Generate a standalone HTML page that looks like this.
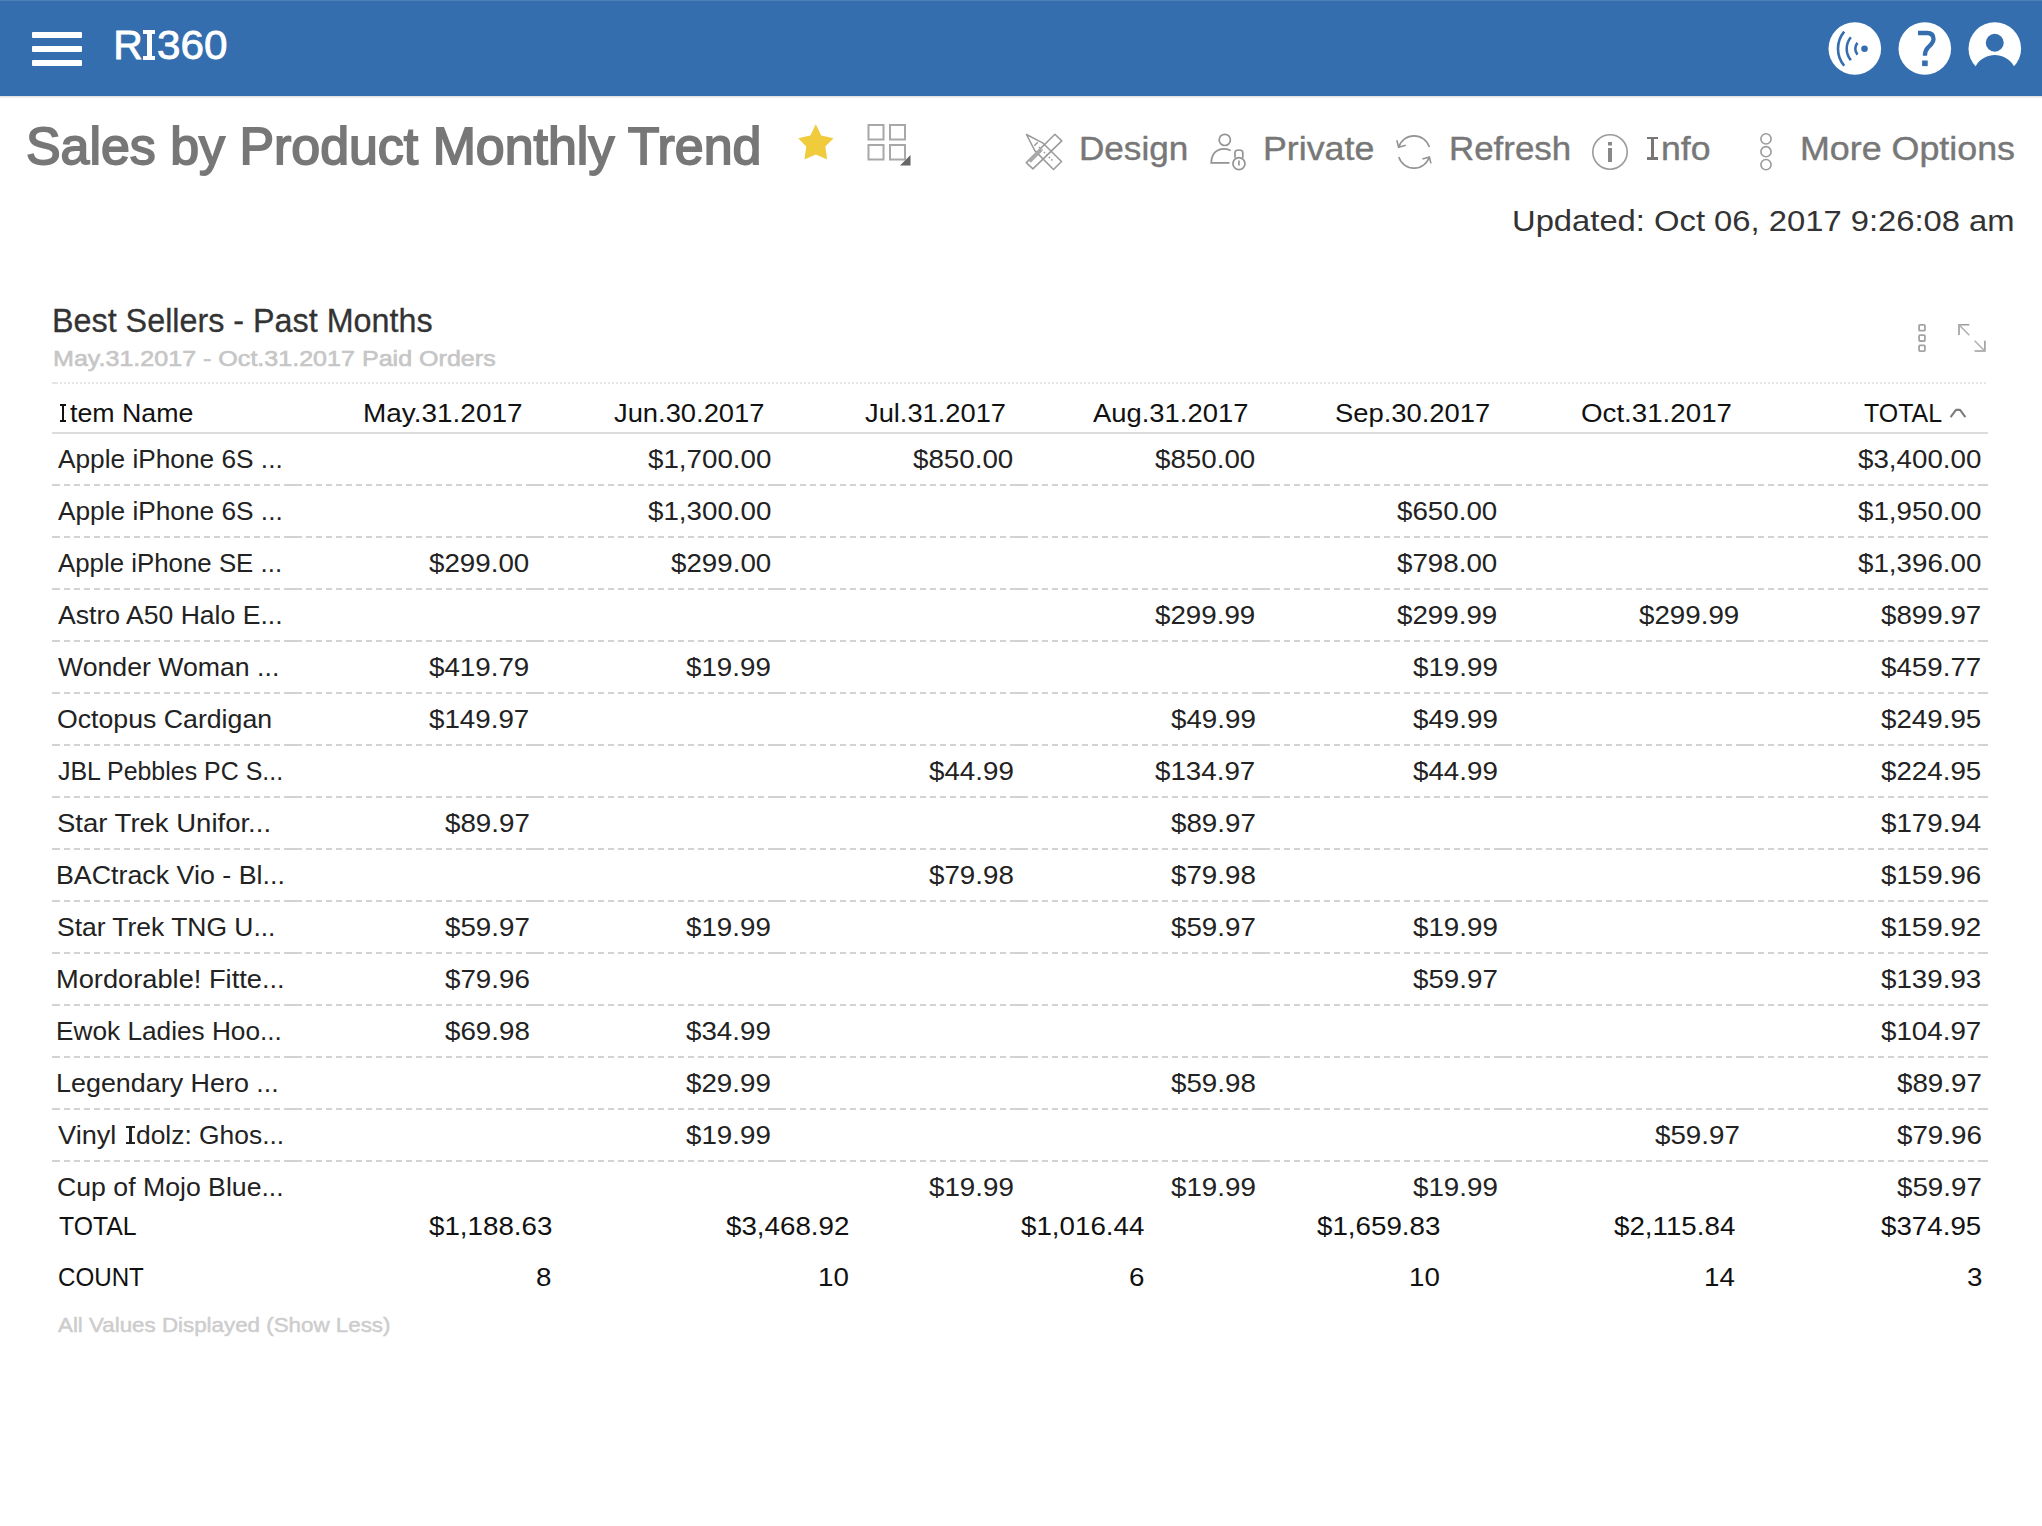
<!DOCTYPE html>
<html><head><meta charset="utf-8"><title>Sales by Product Monthly Trend</title>
<style>
html,body{margin:0;padding:0;}
body{width:2042px;height:1526px;position:relative;overflow:hidden;background:#fff;font-family:'Liberation Sans', sans-serif;}
.t{position:absolute;white-space:nowrap;line-height:normal;transform-origin:0 0;}
svg{display:block;}
.dl{position:absolute;width:242px;height:2px;background:repeating-linear-gradient(90deg,#d2d2d2 0 6px,transparent 6px 10px);background-position:2px 0;}
.dl::before,.dl::after{content:"";position:absolute;top:0;width:8px;height:2px;background:#d2d2d2;}
.dl::before{left:0;} .dl::after{right:0;}
</style></head><body>
<div style="position:absolute;left:0;top:0;width:2042px;height:96px;background:#346eae;"></div>
<div style="position:absolute;left:0;top:0;width:2042px;height:1px;background:#4a7fba;"></div>
<div style="position:absolute;left:0;top:96px;width:2042px;height:2px;background:linear-gradient(#dedede,#f4f4f4);"></div>
<div style="position:absolute;left:32px;top:32px;width:50px;height:6px;background:#fff;border-radius:1px;"></div>
<div style="position:absolute;left:32px;top:46px;width:50px;height:6px;background:#fff;border-radius:1px;"></div>
<div style="position:absolute;left:32px;top:60px;width:50px;height:6px;background:#fff;border-radius:1px;"></div>
<div class="t" style="left:113.20px;top:22.00px;font-size:41px;color:#fff;-webkit-text-stroke:0.8px #fff;">R</div>
<div style="position:absolute;left:143px;top:30.4px;width:12.199999999999989px;height:3.8px;background:#fff;"></div>
<div style="position:absolute;left:143px;top:55.900000000000006px;width:12.199999999999989px;height:3.8px;background:#fff;"></div>
<div style="position:absolute;left:146.6px;top:30.4px;width:5px;height:29.300000000000004px;background:#fff;"></div>
<div class="t" style="left:157.27px;top:22.00px;font-size:41px;color:#fff;transform:scaleX(1.0299);-webkit-text-stroke:0.8px #fff;">360</div>
<svg style="position:absolute;left:1828px;top:22px" width="54" height="54" viewBox="0 0 54 54">
<circle cx="26.8" cy="26.5" r="26.3" fill="#fff"/>
<circle cx="36.5" cy="26.7" r="3.3" fill="#346eae"/>
<g fill="none" stroke="#346eae" stroke-width="2.6">
<path d="M29.45 20.8 A9.2 9.2 0 0 0 29.45 32.6"/>
<path d="M22.86 15.25 A17.8 17.8 0 0 0 22.86 38.15"/>
<path d="M16.2 9.66 A26.5 26.5 0 0 0 16.2 43.74"/>
</g>
</svg>
<svg style="position:absolute;left:1898px;top:22px" width="54" height="54" viewBox="0 0 54 54">
<circle cx="26.8" cy="26.5" r="26.3" fill="#fff"/>
<path d="M20 11 L29 11 C33.5 11 35.5 13.5 35.5 17 C35.5 21 32.5 23 30 25.5 C27.8 27.7 26.9 29.5 26.9 33.8" fill="none" stroke="#346eae" stroke-width="4.3"/>
<rect x="24.1" y="38.5" width="5.6" height="5.6" fill="#346eae"/>
</svg>
<svg style="position:absolute;left:1968px;top:22px" width="54" height="54" viewBox="0 0 54 54">
<circle cx="26.8" cy="26.5" r="26.3" fill="#fff"/>
<circle cx="26.75" cy="20.75" r="9" fill="#346eae"/>
<path d="M0 58 L7.8 44 C12 36.5 20 33 26.8 33 C33.6 33 41.6 36.5 45.8 44 L54 58 Z" fill="#346eae"/>
</svg>
<div class="t" style="left:26.40px;top:115.60px;font-size:52px;color:#777;transform:scaleX(0.9978);-webkit-text-stroke:1.8px #777;">Sales by Product Monthly Trend</div>
<svg style="position:absolute;left:790px;top:115px" width="50" height="50" viewBox="0 0 50 50">
<path d="M25.8 9.2 L31.2 20.4 L43.6 23.2 L35.3 31.5 L37.2 44.6 L25.8 39.5 L14.4 44.6 L16.3 31.5 L8.3 23.2 L20.4 20.4 Z" fill="#f0cb3c"/>
</svg>
<svg style="position:absolute;left:866px;top:122px" width="48" height="48" viewBox="0 0 48 48">
<g fill="none" stroke="#a8a8a8" stroke-width="2">
<rect x="2.5" y="3" width="15" height="14.5"/><rect x="24" y="3" width="15" height="14.5"/>
<rect x="2.5" y="23" width="15" height="14.5"/><rect x="24" y="23" width="15" height="14.5"/>
</g>
<path d="M44.5 33 L44.5 43.5 L34 43.5 Z" fill="#666"/>
</svg>
<svg style="position:absolute;left:1020px;top:128px" width="48" height="48" viewBox="0 0 48 48">
<g fill="none" stroke="#999" stroke-width="1.5" stroke-linejoin="round">
<path d="M6.5 6.5 L22.6 14.8 L41.5 33.5 L33.5 41.5 L14.8 22.6 Z"/>
<path d="M14.3 17.8 L17.8 14.3"/>
<path d="M34.9 6.3 L41.8 12.9 L12.9 40.9 L6.3 34.6 Z"/>
<path d="M19 19 L33 33" stroke-dasharray="1.5 2"/>
<path d="M9.5 33.5 L21 22" stroke-width="3.5" stroke="#a8a8a8"/>
</g>
</svg>
<div class="t" style="left:1078.87px;top:130.00px;font-size:33px;color:#777;transform:scaleX(1.0636);-webkit-text-stroke:0.4px #777;">Design</div>
<svg style="position:absolute;left:1204px;top:128px" width="48" height="48" viewBox="0 0 48 48">
<g fill="none" stroke="#939393" stroke-width="1.7">
<circle cx="20.8" cy="11.9" r="5.6"/>
<path d="M26.7 22.6 C24.5 21.2 22.8 20.8 20.8 20.8 C15 20.8 12 22 9.5 26 C7.8 28.7 7.2 31 7.2 34.9 L25.5 34.9"/>
<path d="M31 29.7 L31 24.5 C31 22.8 32.3 22 34.9 22 C37.5 22 38.8 22.8 38.8 24.5 L38.8 29.7"/>
<circle cx="34.95" cy="35.7" r="6"/>
<path d="M34.9 32.4 L34.9 37.4"/>
</g>
</svg>
<div class="t" style="left:1263.13px;top:130.00px;font-size:33px;color:#777;transform:scaleX(1.0840);-webkit-text-stroke:0.4px #777;">Private</div>
<svg style="position:absolute;left:1390px;top:128px" width="48" height="48" viewBox="0 0 48 48">
<g fill="none" stroke="#939393" stroke-width="1.6">
<path d="M8.8 19 A16 16 0 0 1 39.3 19"/>
<path d="M39.3 29 A16 16 0 0 1 8.8 29"/>
<path d="M6.8 12.3 L8.6 19.2 L15.7 17.2"/>
<path d="M32.4 31 L39.4 28.9 L40.9 35.4"/>
</g>
</svg>
<div class="t" style="left:1448.69px;top:130.00px;font-size:33px;color:#777;transform:scaleX(1.0571);-webkit-text-stroke:0.4px #777;">Refresh</div>
<svg style="position:absolute;left:1590px;top:132px" width="40" height="40" viewBox="0 0 40 40">
<circle cx="20" cy="20" r="17.2" fill="none" stroke="#9a9a9a" stroke-width="1.6"/>
<rect x="18" y="10" width="4" height="3.5" fill="#888"/>
<rect x="18" y="16" width="4" height="14" fill="#888"/>
</svg>
<div style="position:absolute;left:1647px;top:136.5px;width:11px;height:2.6px;background:#777;"></div>
<div style="position:absolute;left:1647px;top:157.4px;width:11px;height:2.6px;background:#777;"></div>
<div style="position:absolute;left:1650.8px;top:136.5px;width:3.4px;height:23.5px;background:#777;"></div>
<div class="t" style="left:1660.84px;top:130.00px;font-size:33px;color:#777;transform:scaleX(1.0791);-webkit-text-stroke:0.4px #777;">nfo</div>
<svg style="position:absolute;left:1756px;top:132px" width="20" height="40" viewBox="0 0 20 40">
<g fill="none" stroke="#9a9a9a" stroke-width="1.6">
<circle cx="10" cy="6.9" r="5.1"/><circle cx="10" cy="19.7" r="5.1"/><circle cx="10" cy="32.6" r="5.1"/>
</g>
</svg>
<div class="t" style="left:1799.53px;top:130.00px;font-size:33px;color:#777;transform:scaleX(1.0856);-webkit-text-stroke:0.4px #777;">More Options</div>
<div class="t" style="left:1511.74px;top:205.00px;font-size:29px;color:#333;transform:scaleX(1.1295);">Updated: Oct 06, 2017 9:26:08 am</div>
<div class="t" style="left:52.07px;top:301.70px;font-size:33.5px;color:#333;transform:scaleX(0.9643);-webkit-text-stroke:0.3px #333;">Best Sellers - Past Months</div>
<div class="t" style="left:52.86px;top:346.00px;font-size:22px;color:#c6c6c6;transform:scaleX(1.1395);-webkit-text-stroke:0.6px #c6c6c6;">May.31.2017 - Oct.31.2017 Paid Orders</div>
<svg style="position:absolute;left:1914px;top:320px" width="16" height="36" viewBox="0 0 16 36">
<g fill="none" stroke="#a4a4a4" stroke-width="1.8">
<rect x="5.1" y="4.9" width="5.8" height="5.8" rx="0.8"/><rect x="5.1" y="15.2" width="5.8" height="5.8" rx="0.8"/><rect x="5.1" y="25.3" width="5.8" height="5.8" rx="0.8"/>
</g>
</svg>
<svg style="position:absolute;left:1954px;top:320px" width="36" height="36" viewBox="0 0 36 36">
<g fill="none" stroke="#9c9c9c" stroke-width="1.6">
<path d="M15.3 4.8 L5 4.8 L5 14.9"/><path d="M5 4.8 L15.3 15.3" stroke="#b0b0b0"/>
<path d="M20.6 31 L30.9 31 L30.9 20.7"/><path d="M30.9 31 L20.6 20.7" stroke="#b0b0b0"/>
</g>
</svg>
<div style="position:absolute;left:52px;top:382px;width:1936px;height:2px;background:repeating-linear-gradient(90deg,#e6e6e6 0 2px,transparent 2px 4px);"></div>
<div style="position:absolute;left:52px;top:382px;width:4px;height:2px;background:#e4e4e4;"></div>
<div style="position:absolute;left:59.8px;top:404px;width:6.200000000000003px;height:1.9px;background:#111;"></div>
<div style="position:absolute;left:59.8px;top:419.90000000000003px;width:6.200000000000003px;height:1.9px;background:#111;"></div>
<div style="position:absolute;left:61.8px;top:404px;width:2.2px;height:17.80000000000001px;background:#111;"></div>
<div class="t" style="left:70.30px;top:398.80px;font-size:25px;color:#111;transform:scaleX(1.0704);">tem Name</div>
<div class="t" style="left:362.56px;top:398.80px;font-size:25px;color:#111;transform:scaleX(1.1179);">May.31.2017</div>
<div class="t" style="left:613.70px;top:398.80px;font-size:25px;color:#111;transform:scaleX(1.0934);">Jun.30.2017</div>
<div class="t" style="left:864.80px;top:398.80px;font-size:25px;color:#111;transform:scaleX(1.0906);">Jul.31.2017</div>
<div class="t" style="left:1093.20px;top:398.80px;font-size:25px;color:#111;transform:scaleX(1.0957);">Aug.31.2017</div>
<div class="t" style="left:1334.51px;top:398.80px;font-size:25px;color:#111;transform:scaleX(1.0943);">Sep.30.2017</div>
<div class="t" style="left:1581.39px;top:398.80px;font-size:25px;color:#111;transform:scaleX(1.1082);">Oct.31.2017</div>
<div class="t" style="left:1864.20px;top:398.80px;font-size:25px;color:#111;transform:scaleX(0.9974);">TOTAL</div>
<svg style="position:absolute;left:1948px;top:404px" width="20" height="16" viewBox="0 0 20 16">
<path d="M2.6 13.2 L8 5.9 L12 5.9 L17.4 13.2" fill="none" stroke="#7c7c7c" stroke-width="2.1" stroke-linejoin="round"/>
</svg>
<div style="position:absolute;left:52px;top:432px;width:1936px;height:2px;background:#dcdcdc;"></div>
<div class="t" style="left:58.00px;top:444.70px;font-size:25px;color:#222;transform:scaleX(1.0500);">Apple iPhone 6S ...</div>
<div class="t" style="left:647.62px;top:444.70px;font-size:25px;color:#222;transform:scaleX(1.1098);">$1,700.00</div>
<div class="t" style="left:913.12px;top:444.70px;font-size:25px;color:#222;transform:scaleX(1.1098);">$850.00</div>
<div class="t" style="left:1155.12px;top:444.70px;font-size:25px;color:#222;transform:scaleX(1.1098);">$850.00</div>
<div class="t" style="left:1857.82px;top:444.70px;font-size:25px;color:#222;transform:scaleX(1.1098);">$3,400.00</div>
<div class="dl" style="left:52px;top:484px;"></div>
<div class="dl" style="left:294px;top:484px;"></div>
<div class="dl" style="left:536px;top:484px;"></div>
<div class="dl" style="left:778px;top:484px;"></div>
<div class="dl" style="left:1020px;top:484px;"></div>
<div class="dl" style="left:1262px;top:484px;"></div>
<div class="dl" style="left:1504px;top:484px;"></div>
<div class="dl" style="left:1746px;top:484px;"></div>
<div class="t" style="left:58.00px;top:496.70px;font-size:25px;color:#222;transform:scaleX(1.0500);">Apple iPhone 6S ...</div>
<div class="t" style="left:647.62px;top:496.70px;font-size:25px;color:#222;transform:scaleX(1.1098);">$1,300.00</div>
<div class="t" style="left:1397.12px;top:496.70px;font-size:25px;color:#222;transform:scaleX(1.1098);">$650.00</div>
<div class="t" style="left:1857.82px;top:496.70px;font-size:25px;color:#222;transform:scaleX(1.1098);">$1,950.00</div>
<div class="dl" style="left:52px;top:536px;"></div>
<div class="dl" style="left:294px;top:536px;"></div>
<div class="dl" style="left:536px;top:536px;"></div>
<div class="dl" style="left:778px;top:536px;"></div>
<div class="dl" style="left:1020px;top:536px;"></div>
<div class="dl" style="left:1262px;top:536px;"></div>
<div class="dl" style="left:1504px;top:536px;"></div>
<div class="dl" style="left:1746px;top:536px;"></div>
<div class="t" style="left:58.00px;top:548.70px;font-size:25px;color:#222;transform:scaleX(1.0335);">Apple iPhone SE ...</div>
<div class="t" style="left:429.42px;top:548.70px;font-size:25px;color:#222;transform:scaleX(1.1098);">$299.00</div>
<div class="t" style="left:670.92px;top:548.70px;font-size:25px;color:#222;transform:scaleX(1.1098);">$299.00</div>
<div class="t" style="left:1397.12px;top:548.70px;font-size:25px;color:#222;transform:scaleX(1.1098);">$798.00</div>
<div class="t" style="left:1857.82px;top:548.70px;font-size:25px;color:#222;transform:scaleX(1.1098);">$1,396.00</div>
<div class="dl" style="left:52px;top:588px;"></div>
<div class="dl" style="left:294px;top:588px;"></div>
<div class="dl" style="left:536px;top:588px;"></div>
<div class="dl" style="left:778px;top:588px;"></div>
<div class="dl" style="left:1020px;top:588px;"></div>
<div class="dl" style="left:1262px;top:588px;"></div>
<div class="dl" style="left:1504px;top:588px;"></div>
<div class="dl" style="left:1746px;top:588px;"></div>
<div class="t" style="left:58.00px;top:600.70px;font-size:25px;color:#222;transform:scaleX(1.0632);">Astro A50 Halo E...</div>
<div class="t" style="left:1155.12px;top:600.70px;font-size:25px;color:#222;transform:scaleX(1.1098);">$299.99</div>
<div class="t" style="left:1397.12px;top:600.70px;font-size:25px;color:#222;transform:scaleX(1.1098);">$299.99</div>
<div class="t" style="left:1639.12px;top:600.70px;font-size:25px;color:#222;transform:scaleX(1.1098);">$299.99</div>
<div class="t" style="left:1881.12px;top:600.70px;font-size:25px;color:#222;transform:scaleX(1.1098);">$899.97</div>
<div class="dl" style="left:52px;top:640px;"></div>
<div class="dl" style="left:294px;top:640px;"></div>
<div class="dl" style="left:536px;top:640px;"></div>
<div class="dl" style="left:778px;top:640px;"></div>
<div class="dl" style="left:1020px;top:640px;"></div>
<div class="dl" style="left:1262px;top:640px;"></div>
<div class="dl" style="left:1504px;top:640px;"></div>
<div class="dl" style="left:1746px;top:640px;"></div>
<div class="t" style="left:58.00px;top:652.70px;font-size:25px;color:#222;transform:scaleX(1.0665);">Wonder Woman ...</div>
<div class="t" style="left:429.42px;top:652.70px;font-size:25px;color:#222;transform:scaleX(1.1098);">$419.79</div>
<div class="t" style="left:686.46px;top:652.70px;font-size:25px;color:#222;transform:scaleX(1.1098);">$19.99</div>
<div class="t" style="left:1412.66px;top:652.70px;font-size:25px;color:#222;transform:scaleX(1.1098);">$19.99</div>
<div class="t" style="left:1881.12px;top:652.70px;font-size:25px;color:#222;transform:scaleX(1.1098);">$459.77</div>
<div class="dl" style="left:52px;top:692px;"></div>
<div class="dl" style="left:294px;top:692px;"></div>
<div class="dl" style="left:536px;top:692px;"></div>
<div class="dl" style="left:778px;top:692px;"></div>
<div class="dl" style="left:1020px;top:692px;"></div>
<div class="dl" style="left:1262px;top:692px;"></div>
<div class="dl" style="left:1504px;top:692px;"></div>
<div class="dl" style="left:1746px;top:692px;"></div>
<div class="t" style="left:56.93px;top:704.70px;font-size:25px;color:#222;transform:scaleX(1.0673);">Octopus Cardigan</div>
<div class="t" style="left:429.42px;top:704.70px;font-size:25px;color:#222;transform:scaleX(1.1098);">$149.97</div>
<div class="t" style="left:1170.66px;top:704.70px;font-size:25px;color:#222;transform:scaleX(1.1098);">$49.99</div>
<div class="t" style="left:1412.66px;top:704.70px;font-size:25px;color:#222;transform:scaleX(1.1098);">$49.99</div>
<div class="t" style="left:1881.12px;top:704.70px;font-size:25px;color:#222;transform:scaleX(1.1098);">$249.95</div>
<div class="dl" style="left:52px;top:744px;"></div>
<div class="dl" style="left:294px;top:744px;"></div>
<div class="dl" style="left:536px;top:744px;"></div>
<div class="dl" style="left:778px;top:744px;"></div>
<div class="dl" style="left:1020px;top:744px;"></div>
<div class="dl" style="left:1262px;top:744px;"></div>
<div class="dl" style="left:1504px;top:744px;"></div>
<div class="dl" style="left:1746px;top:744px;"></div>
<div class="t" style="left:58.00px;top:756.70px;font-size:25px;color:#222;transform:scaleX(0.9978);">JBL Pebbles PC S...</div>
<div class="t" style="left:928.66px;top:756.70px;font-size:25px;color:#222;transform:scaleX(1.1098);">$44.99</div>
<div class="t" style="left:1155.12px;top:756.70px;font-size:25px;color:#222;transform:scaleX(1.1098);">$134.97</div>
<div class="t" style="left:1412.66px;top:756.70px;font-size:25px;color:#222;transform:scaleX(1.1098);">$44.99</div>
<div class="t" style="left:1881.12px;top:756.70px;font-size:25px;color:#222;transform:scaleX(1.1098);">$224.95</div>
<div class="dl" style="left:52px;top:796px;"></div>
<div class="dl" style="left:294px;top:796px;"></div>
<div class="dl" style="left:536px;top:796px;"></div>
<div class="dl" style="left:778px;top:796px;"></div>
<div class="dl" style="left:1020px;top:796px;"></div>
<div class="dl" style="left:1262px;top:796px;"></div>
<div class="dl" style="left:1504px;top:796px;"></div>
<div class="dl" style="left:1746px;top:796px;"></div>
<div class="t" style="left:56.90px;top:808.70px;font-size:25px;color:#222;transform:scaleX(1.1005);">Star Trek Unifor...</div>
<div class="t" style="left:444.96px;top:808.70px;font-size:25px;color:#222;transform:scaleX(1.1098);">$89.97</div>
<div class="t" style="left:1170.66px;top:808.70px;font-size:25px;color:#222;transform:scaleX(1.1098);">$89.97</div>
<div class="t" style="left:1881.12px;top:808.70px;font-size:25px;color:#222;transform:scaleX(1.1098);">$179.94</div>
<div class="dl" style="left:52px;top:848px;"></div>
<div class="dl" style="left:294px;top:848px;"></div>
<div class="dl" style="left:536px;top:848px;"></div>
<div class="dl" style="left:778px;top:848px;"></div>
<div class="dl" style="left:1020px;top:848px;"></div>
<div class="dl" style="left:1262px;top:848px;"></div>
<div class="dl" style="left:1504px;top:848px;"></div>
<div class="dl" style="left:1746px;top:848px;"></div>
<div class="t" style="left:55.86px;top:860.70px;font-size:25px;color:#222;transform:scaleX(1.0719);">BACtrack Vio - Bl...</div>
<div class="t" style="left:928.66px;top:860.70px;font-size:25px;color:#222;transform:scaleX(1.1098);">$79.98</div>
<div class="t" style="left:1170.66px;top:860.70px;font-size:25px;color:#222;transform:scaleX(1.1098);">$79.98</div>
<div class="t" style="left:1881.12px;top:860.70px;font-size:25px;color:#222;transform:scaleX(1.1098);">$159.96</div>
<div class="dl" style="left:52px;top:900px;"></div>
<div class="dl" style="left:294px;top:900px;"></div>
<div class="dl" style="left:536px;top:900px;"></div>
<div class="dl" style="left:778px;top:900px;"></div>
<div class="dl" style="left:1020px;top:900px;"></div>
<div class="dl" style="left:1262px;top:900px;"></div>
<div class="dl" style="left:1504px;top:900px;"></div>
<div class="dl" style="left:1746px;top:900px;"></div>
<div class="t" style="left:56.94px;top:912.70px;font-size:25px;color:#222;transform:scaleX(1.0578);">Star Trek TNG U...</div>
<div class="t" style="left:444.96px;top:912.70px;font-size:25px;color:#222;transform:scaleX(1.1098);">$59.97</div>
<div class="t" style="left:686.46px;top:912.70px;font-size:25px;color:#222;transform:scaleX(1.1098);">$19.99</div>
<div class="t" style="left:1170.66px;top:912.70px;font-size:25px;color:#222;transform:scaleX(1.1098);">$59.97</div>
<div class="t" style="left:1412.66px;top:912.70px;font-size:25px;color:#222;transform:scaleX(1.1098);">$19.99</div>
<div class="t" style="left:1881.12px;top:912.70px;font-size:25px;color:#222;transform:scaleX(1.1098);">$159.92</div>
<div class="dl" style="left:52px;top:952px;"></div>
<div class="dl" style="left:294px;top:952px;"></div>
<div class="dl" style="left:536px;top:952px;"></div>
<div class="dl" style="left:778px;top:952px;"></div>
<div class="dl" style="left:1020px;top:952px;"></div>
<div class="dl" style="left:1262px;top:952px;"></div>
<div class="dl" style="left:1504px;top:952px;"></div>
<div class="dl" style="left:1746px;top:952px;"></div>
<div class="t" style="left:55.82px;top:964.70px;font-size:25px;color:#222;transform:scaleX(1.0898);">Mordorable! Fitte...</div>
<div class="t" style="left:444.96px;top:964.70px;font-size:25px;color:#222;transform:scaleX(1.1098);">$79.96</div>
<div class="t" style="left:1412.66px;top:964.70px;font-size:25px;color:#222;transform:scaleX(1.1098);">$59.97</div>
<div class="t" style="left:1881.12px;top:964.70px;font-size:25px;color:#222;transform:scaleX(1.1098);">$139.93</div>
<div class="dl" style="left:52px;top:1004px;"></div>
<div class="dl" style="left:294px;top:1004px;"></div>
<div class="dl" style="left:536px;top:1004px;"></div>
<div class="dl" style="left:778px;top:1004px;"></div>
<div class="dl" style="left:1020px;top:1004px;"></div>
<div class="dl" style="left:1262px;top:1004px;"></div>
<div class="dl" style="left:1504px;top:1004px;"></div>
<div class="dl" style="left:1746px;top:1004px;"></div>
<div class="t" style="left:55.90px;top:1016.70px;font-size:25px;color:#222;transform:scaleX(1.0486);">Ewok Ladies Hoo...</div>
<div class="t" style="left:444.96px;top:1016.70px;font-size:25px;color:#222;transform:scaleX(1.1098);">$69.98</div>
<div class="t" style="left:686.46px;top:1016.70px;font-size:25px;color:#222;transform:scaleX(1.1098);">$34.99</div>
<div class="t" style="left:1881.12px;top:1016.70px;font-size:25px;color:#222;transform:scaleX(1.1098);">$104.97</div>
<div class="dl" style="left:52px;top:1056px;"></div>
<div class="dl" style="left:294px;top:1056px;"></div>
<div class="dl" style="left:536px;top:1056px;"></div>
<div class="dl" style="left:778px;top:1056px;"></div>
<div class="dl" style="left:1020px;top:1056px;"></div>
<div class="dl" style="left:1262px;top:1056px;"></div>
<div class="dl" style="left:1504px;top:1056px;"></div>
<div class="dl" style="left:1746px;top:1056px;"></div>
<div class="t" style="left:55.85px;top:1068.70px;font-size:25px;color:#222;transform:scaleX(1.0759);">Legendary Hero ...</div>
<div class="t" style="left:686.46px;top:1068.70px;font-size:25px;color:#222;transform:scaleX(1.1098);">$29.99</div>
<div class="t" style="left:1170.66px;top:1068.70px;font-size:25px;color:#222;transform:scaleX(1.1098);">$59.98</div>
<div class="t" style="left:1896.66px;top:1068.70px;font-size:25px;color:#222;transform:scaleX(1.1098);">$89.97</div>
<div class="dl" style="left:52px;top:1108px;"></div>
<div class="dl" style="left:294px;top:1108px;"></div>
<div class="dl" style="left:536px;top:1108px;"></div>
<div class="dl" style="left:778px;top:1108px;"></div>
<div class="dl" style="left:1020px;top:1108px;"></div>
<div class="dl" style="left:1262px;top:1108px;"></div>
<div class="dl" style="left:1504px;top:1108px;"></div>
<div class="dl" style="left:1746px;top:1108px;"></div>
<div class="t" style="left:58.20px;top:1120.70px;font-size:25px;color:#222;transform:scaleX(1.0868);">Vinyl</div>
<div style="position:absolute;left:126.4px;top:1125.9px;width:8.199999999999989px;height:1.9px;background:#222;"></div>
<div style="position:absolute;left:126.4px;top:1141.8px;width:8.199999999999989px;height:1.9px;background:#222;"></div>
<div style="position:absolute;left:129.4px;top:1125.9px;width:2.2px;height:17.799999999999955px;background:#222;"></div>
<div class="t" style="left:135.94px;top:1120.70px;font-size:25px;color:#222;transform:scaleX(1.0558);">dolz: Ghos...</div>
<div class="t" style="left:686.46px;top:1120.70px;font-size:25px;color:#222;transform:scaleX(1.1098);">$19.99</div>
<div class="t" style="left:1654.66px;top:1120.70px;font-size:25px;color:#222;transform:scaleX(1.1098);">$59.97</div>
<div class="t" style="left:1896.66px;top:1120.70px;font-size:25px;color:#222;transform:scaleX(1.1098);">$79.96</div>
<div class="dl" style="left:52px;top:1160px;"></div>
<div class="dl" style="left:294px;top:1160px;"></div>
<div class="dl" style="left:536px;top:1160px;"></div>
<div class="dl" style="left:778px;top:1160px;"></div>
<div class="dl" style="left:1020px;top:1160px;"></div>
<div class="dl" style="left:1262px;top:1160px;"></div>
<div class="dl" style="left:1504px;top:1160px;"></div>
<div class="dl" style="left:1746px;top:1160px;"></div>
<div class="t" style="left:56.93px;top:1172.70px;font-size:25px;color:#222;transform:scaleX(1.0662);">Cup of Mojo Blue...</div>
<div class="t" style="left:928.66px;top:1172.70px;font-size:25px;color:#222;transform:scaleX(1.1098);">$19.99</div>
<div class="t" style="left:1170.66px;top:1172.70px;font-size:25px;color:#222;transform:scaleX(1.1098);">$19.99</div>
<div class="t" style="left:1412.66px;top:1172.70px;font-size:25px;color:#222;transform:scaleX(1.1098);">$19.99</div>
<div class="t" style="left:1896.66px;top:1172.70px;font-size:25px;color:#222;transform:scaleX(1.1098);">$59.97</div>
<div class="t" style="left:58.70px;top:1212.40px;font-size:25px;color:#111;transform:scaleX(0.9910);">TOTAL</div>
<div class="t" style="left:428.63px;top:1212.40px;font-size:25px;color:#111;transform:scaleX(1.1098);">$1,188.63</div>
<div class="t" style="left:725.53px;top:1212.40px;font-size:25px;color:#111;transform:scaleX(1.1098);">$3,468.92</div>
<div class="t" style="left:1020.62px;top:1212.40px;font-size:25px;color:#111;transform:scaleX(1.1098);">$1,016.44</div>
<div class="t" style="left:1317.13px;top:1212.40px;font-size:25px;color:#111;transform:scaleX(1.1098);">$1,659.83</div>
<div class="t" style="left:1614.04px;top:1212.40px;font-size:25px;color:#111;transform:scaleX(1.1098);">$2,115.84</div>
<div class="t" style="left:1881.42px;top:1212.40px;font-size:25px;color:#111;transform:scaleX(1.1098);">$374.95</div>
<div class="t" style="left:57.73px;top:1262.60px;font-size:25px;color:#111;transform:scaleX(0.9659);">COUNT</div>
<div class="t" style="left:536.27px;top:1262.60px;font-size:25px;color:#111;transform:scaleX(1.1098);">8</div>
<div class="t" style="left:817.64px;top:1262.60px;font-size:25px;color:#111;transform:scaleX(1.1098);">10</div>
<div class="t" style="left:1129.37px;top:1262.60px;font-size:25px;color:#111;transform:scaleX(1.1098);">6</div>
<div class="t" style="left:1409.24px;top:1262.60px;font-size:25px;color:#111;transform:scaleX(1.1098);">10</div>
<div class="t" style="left:1703.93px;top:1262.60px;font-size:25px;color:#111;transform:scaleX(1.1098);">14</div>
<div class="t" style="left:1966.87px;top:1262.60px;font-size:25px;color:#111;transform:scaleX(1.1098);">3</div>
<div class="t" style="left:58.20px;top:1312.60px;font-size:21px;color:#cdcdcd;transform:scaleX(1.0641);-webkit-text-stroke:0.5px #cdcdcd;">All Values Displayed (Show Less)</div>
</body></html>
